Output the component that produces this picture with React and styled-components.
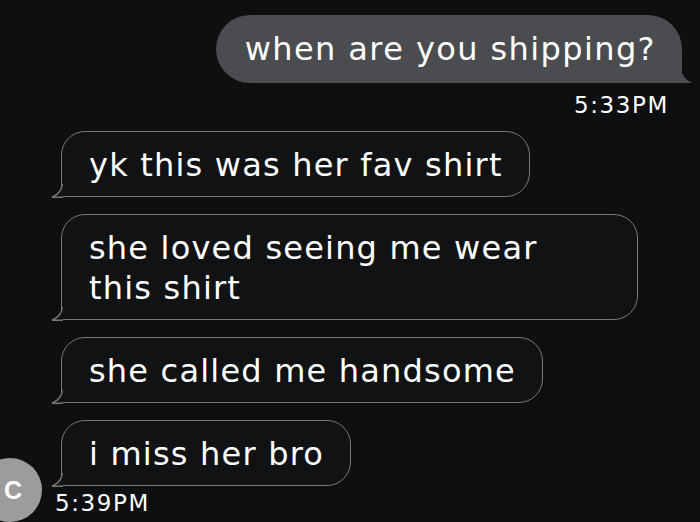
import React from "react";
import styled, { createGlobalStyle } from "styled-components";

const Global = createGlobalStyle`
  html, body { margin: 0; padding: 0; background: #0e0f11; }
  body { width: 700px; height: 522px; overflow: hidden; font-family: "DejaVu Sans", "Liberation Sans", sans-serif; }
`;

const Screen = styled.div`
  width: 700px;
  height: 522px;
  box-sizing: border-box;
  padding-top: 15px;
  display: flex;
  flex-direction: column;
  overflow: hidden;
  position: relative;
`;

const OutRow = styled.div`
  display: flex;
  flex-direction: column;
  align-items: flex-end;
  padding-right: 18px;
`;

const OutBubble = styled.div`
  position: relative;
  background: #4b4c50;
  color: #fff;
  font-size: 32px;
  letter-spacing: 1.4px;
  line-height: 38px;
  padding: 15px 26px 15px 29px;
  border-radius: 34px 34px 0 34px;
`;

const OutTail = styled.svg`
  position: absolute;
  right: -11px;
  bottom: 0;
  width: 12px;
  height: 14px;
`;

const Time = styled.div`
  color: #fff;
  font-size: 23px;
  letter-spacing: 1.6px;
  line-height: 26px;
  margin: ${(p) => p.$m || "0"};
`;

const InGroup = styled.div`
  display: grid;
  grid-template-columns: 61px auto;
  margin-top: 13px;
`;

const InColumn = styled.div`
  grid-column: 2;
  grid-row: 1;
  display: flex;
  flex-direction: column;
  align-items: flex-start;
  gap: 17px;
`;

const InBubble = styled.div`
  position: relative;
  box-sizing: border-box;
  background: #111214;
  color: #fff;
  font-size: 32px;
  letter-spacing: 1.2px;
  line-height: 40px;
  padding: 13px 26px 11px 27px;
  border: 1.5px solid #77787a;
  border-radius: 24px 24px 24px 0;
  max-width: ${(p) => p.$max || "none"};
`;

const InTail = styled.svg`
  position: absolute;
  left: -11px;
  bottom: -1.5px;
  width: 12px;
  height: 14px;
  overflow: visible;
`;

const Avatar = styled.div`
  grid-column: 1;
  grid-row: 1;
  align-self: end;
  margin-left: -22px;
  margin-bottom: -6px;
  width: 64px;
  height: 64px;
  border-radius: 50%;
  background: #9c9c9c;
  color: #fff;
  font-family: "Liberation Sans", sans-serif;
  font-size: 25px;
  font-weight: 700;
  display: flex;
  align-items: center;
  justify-content: flex-end;
  padding-right: 20px;
  box-sizing: border-box;
`;

function In({ children, max }) {
  return (
    <InBubble $max={max}>
      {children}
      <InTail viewBox="0 0 12 14">
        <path d="M12 0 Q11 9 1.5 13.2 L12 13.2 Z" fill="#111214" />
        <path d="M11.2 0 Q11 9 1 13.2 L12 13.2" fill="none" stroke="#77787a" strokeWidth="1.5" />
      </InTail>
    </InBubble>
  );
}

export default function App() {
  return (
    <Screen>
      <Global />
      <OutRow>
        <OutBubble>
          when are you shipping?
          <OutTail viewBox="0 0 12 14">
            <path d="M0 0 Q1 9 11 14 L0 14 Z" fill="#4b4c50" />
          </OutTail>
        </OutBubble>
        <Time $m="9px 13px 0 0">5:33PM</Time>
      </OutRow>
      <InGroup>
        <InColumn>
          <In>yk this was her fav shirt</In>
          <In max="577px">she loved seeing me wear this shirt</In>
          <In>she called me handsome</In>
          <div>
            <In>i miss her bro</In>
            <Time $m="4px 0 0 -6px">5:39PM</Time>
          </div>
        </InColumn>
        <Avatar>C</Avatar>
      </InGroup>
    </Screen>
  );
}
